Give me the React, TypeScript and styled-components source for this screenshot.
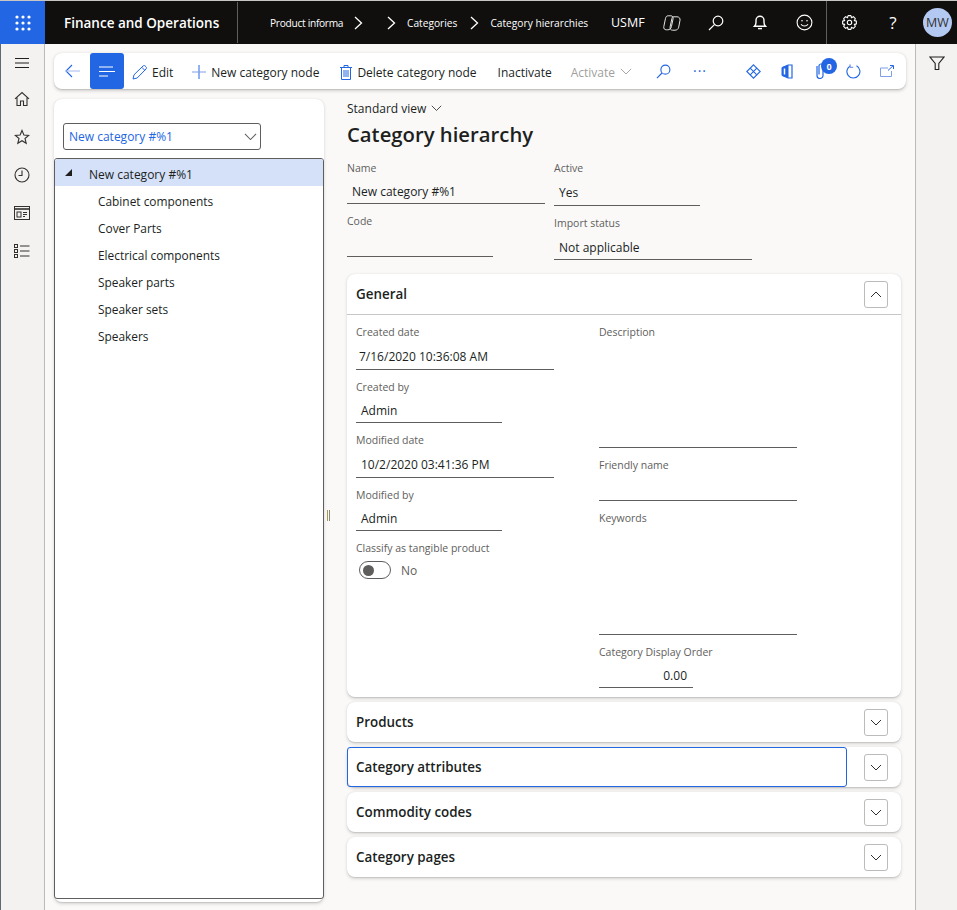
import styled, { createGlobalStyle } from "styled-components";

const BLUE = "#2266e3";
const FONT = `"Open Sans", "Noto Sans", "Liberation Sans", sans-serif`;

const GlobalStyle = createGlobalStyle`
  html, body {
    margin: 0;
    padding: 0;
    background: #faf9f8;
  }
  body {
    font-family: ${FONT};
    color: #201f1e;
  }
  * {
    box-sizing: border-box;
  }
`;

/* icons */

function Waffle() {
  const dots = [4, 10, 16];
  return (
    <svg width="20" height="20" viewBox="0 0 20 20" fill="#fff">
      {dots.map((y) =>
        dots.map((x) => <circle key={`${x}-${y}`} cx={x} cy={y} r="1.6" />)
      )}
    </svg>
  );
}

function Chevron({ size = 14, color = "#fff" }: { size?: number; color?: string }) {
  return (
    <svg width={size} height={size} viewBox="0 0 14 14" fill="none" stroke={color} strokeWidth="1.3">
      <path d="M4 1l6.5 6L4 13" />
    </svg>
  );
}

function ChevronDown({ width = 14, color = "#605e5c" }: { width?: number; color?: string }) {
  return (
    <svg width={width} height={width * 0.6} viewBox="0 0 14 8.4" fill="none" stroke={color} strokeWidth="1.1">
      <path d="M1 1l6 6 6-6" />
    </svg>
  );
}

function Search({ color = "#fff", size = 16 }: { color?: string; size?: number }) {
  return (
    <svg width={size} height={size} viewBox="0 0 16 16" fill="none" stroke={color} strokeWidth="1.2">
      <circle cx="10" cy="6" r="4.8" />
      <path d="M6.4 9.6L1 15" />
    </svg>
  );
}

function Copilot() {
  return (
    <svg width="18" height="16" viewBox="0 0 18 16" fill="none" stroke="#e6e6e6" strokeWidth="1">
      <path d="M5.200.8h2.600c1.700 0 2.700 1.300 2.300 3l-1.700 7.900c-.5 2.100-1.800 3.100-3.500 3.100H3.300C1.500 14.800.400 13.400.800 11.600L2.500 3.400C2.900 1.700 3.700.8 5.200.8z" />
      <path d="M10.300 1.800h3.700c2.100 0 3.400 1.500 3 3.500l-1.300 6.900c-.5 2-1.900 3-3.600 3H9.600c-1.900 0-2.900-1.400-2.500-3.200L8.600 5c.4-2.100.6-3.200 1.700-3.200z" />
    </svg>
  );
}

function Bell() {
  return (
    <svg width="14" height="15" viewBox="0 0 14 15" fill="none" stroke="#fff" strokeWidth="1.4">
      <path d="M1.500 11.200c.9-1 1.500-2 1.500-3.700V5.300a4 4 0 018 0v2.200c0 1.700.6 2.700 1.500 3.700z" />
      <path d="M5 13.600h4" />
    </svg>
  );
}

function Smiley() {
  return (
    <svg width="17" height="17" viewBox="0 0 17 17" fill="none" stroke="#fff" strokeWidth="1.1">
      <circle cx="8.500" cy="8.500" r="7.400" />
      <circle cx="6" cy="6.800" r=".8" fill="#fff" stroke="none" />
      <circle cx="11" cy="6.800" r=".8" fill="#fff" stroke="none" />
      <path d="M5 10.200c1.600 2.400 5.400 2.400 7 0" />
    </svg>
  );
}

function Gear() {
  // eight teeth round a ring, worked out rather than typed in
  const points: string[] = [];
  for (let i = 0; i < 8; i++) {
    const mid = (i * Math.PI) / 4;
    [
      [-0.42, 5.2],
      [-0.2, 7],
      [0.2, 7],
      [0.42, 5.2],
    ].forEach(([offset, radius]) => {
      const x = 7.5 + radius * Math.cos(mid + offset);
      const y = 7.5 + radius * Math.sin(mid + offset);
      points.push(`${x.toFixed(2)},${y.toFixed(2)}`);
    });
  }
  return (
    <svg width="15" height="15" viewBox="0 0 15 15" fill="none" stroke="#fff" strokeWidth="1.1">
      <polygon points={points.join(" ")} strokeLinejoin="round" />
      <circle cx="7.500" cy="7.500" r="2.200" />
    </svg>
  );
}

function Hamburger() {
  return (
    <svg width="16" height="12" viewBox="0 0 16 12" stroke="#201f1e" strokeWidth="1">
      <path d="M1 1.500h14M1 6h14M1 10.500h14" />
    </svg>
  );
}

function Home() {
  return (
    <svg width="16" height="16" viewBox="0 0 16 16" fill="none" stroke="#323130" strokeWidth="1.1">
      <path d="M1 7.800L8 1.600l7 6.200M3 6.400V14.500h3.500V10h3v4.500H13V6.400" />
    </svg>
  );
}

function Star() {
  return (
    <svg width="16" height="16" viewBox="0 0 16 16" fill="none" stroke="#323130" strokeWidth="1.1">
      <path d="M8 1.500l1.900 4.500 4.800.4-3.700 3.100 1.200 4.800L8 11.700l-4.200 2.600L5 9.500 1.300 6.400 6.100 6z" />
    </svg>
  );
}

function Clock() {
  return (
    <svg width="16" height="16" viewBox="0 0 16 16" fill="none" stroke="#323130" strokeWidth="1.1">
      <circle cx="8" cy="8" r="7" />
      <path d="M8 3.500V8.500H4.500" />
    </svg>
  );
}

function Workspace() {
  return (
    <svg width="16" height="14" viewBox="0 0 16 14" fill="none" stroke="#323130" strokeWidth="1">
      <rect x=".5" y=".5" width="15" height="13" />
      <path d="M.5 3h15" strokeWidth="1.600" />
      <rect x="3" y="6" width="4" height="5" />
      <path d="M9 6.500h4M9 8.500h4M9 10.500h2" />
    </svg>
  );
}

function ModuleList() {
  return (
    <svg width="16" height="14" viewBox="0 0 16 14" fill="none" stroke="#323130" strokeWidth="1">
      <rect x=".5" y=".5" width="3" height="3" />
      <rect x=".5" y="5.500" width="3" height="3" />
      <rect x=".5" y="10.500" width="3" height="3" />
      <path d="M6 2h9.500M6 7h9.500M6 12h9.500" />
    </svg>
  );
}

function Funnel() {
  return (
    <svg width="16" height="16" viewBox="0 0 16 16" fill="none" stroke="#201f1e" strokeWidth="1.1">
      <path d="M1 2h14L9.800 8.500V14.500H6.200V8.500z" />
    </svg>
  );
}

function BackArrow() {
  return (
    <svg width="15" height="14" viewBox="0 0 15 14" fill="none" stroke={BLUE} strokeWidth="1.1">
      <path d="M7 1L1 7l6 6" />
      <path d="M1 7h14" stroke="#a9bff0" />
    </svg>
  );
}

function Lines() {
  return (
    <svg width="16" height="11" viewBox="0 0 16 11" stroke="#fff" strokeWidth="1.200">
      <path d="M0 1h14M0 5.500h16M0 10h9" />
    </svg>
  );
}

function Pencil() {
  return (
    <svg width="15" height="15" viewBox="0 0 15 15" fill="none" stroke={BLUE} strokeWidth="1">
      <path d="M1 14l1-4.200L11 1c.7-.6 1.600-.6 2.200 0l.8.8c.6.6.6 1.500 0 2.200L5.200 13z" />
      <path d="M9.800 2.300l2.900 2.900" />
    </svg>
  );
}

function Plus() {
  return (
    <svg width="14" height="14" viewBox="0 0 14 14" stroke={BLUE} strokeWidth="1">
      <path d="M7 0v14" />
      <path d="M0 7h14" stroke="#7f9fe8" />
    </svg>
  );
}

function Trash() {
  return (
    <svg width="12" height="15" viewBox="0 0 12 15" fill="none" stroke={BLUE} strokeWidth="1">
      <path d="M0 2.500h12M4 2.500V.500h4v2M1.500 2.500v12h9v-12M4 5v7M6 5v7M8 5v7" />
    </svg>
  );
}

function Diamond() {
  return (
    <svg width="15" height="15" viewBox="0 0 15 15" fill="none" stroke={BLUE} strokeWidth="1.100">
      <path d="M7.500.800L14.200 7.500 7.500 14.200.800 7.500z" />
      <path d="M4.200 4.200l6.600 6.600M10.800 4.200l-6.600 6.600" />
    </svg>
  );
}

function OfficeMark() {
  return (
    <svg width="12" height="15" viewBox="0 0 12 15" fill="none" stroke={BLUE}>
      <path d="M1 3.500L7 1v13l-6-2.500z" fill={BLUE} strokeWidth="1" />
      <path d="M7 1h4v13H7" strokeWidth="1.200" />
      <path d="M3.500 4.500v6" stroke="#fff" strokeWidth="1.500" />
    </svg>
  );
}

function Clip() {
  return (
    <svg width="8" height="16" viewBox="0 0 8 16" fill="none" stroke={BLUE} strokeWidth="1.200">
      <path d="M1 3v9.500a3 3 0 006 0V3a2 2 0 00-4 0v8.500" />
    </svg>
  );
}

function Refresh() {
  return (
    <svg width="15" height="15" viewBox="0 0 15 15" fill="none" stroke={BLUE} strokeWidth="1.100">
      <path d="M4.500 1.700a6.500 6.500 0 106 .1" />
      <path d="M4 .2v3.200h3.200" stroke="#7f9fe8" />
    </svg>
  );
}

function OpenOut() {
  return (
    <svg width="14" height="12" viewBox="0 0 14 12" fill="none" stroke={BLUE} strokeWidth="1">
      <path d="M8 3H.500v8.500h11V6" stroke="#7f9fe8" />
      <path d="M8 5.500L13 .800M10 .500h3.500V4" />
    </svg>
  );
}

/* top bar */

const TopBar = styled.header`
  display: flex;
  align-items: center;
  height: 44px;
  border-top: 1px solid #c8c6c4;
  background: #100f0e;
  color: #fff;
`;

const WaffleButton = styled.div`
  display: flex;
  align-items: center;
  justify-content: center;
  width: 45px;
  height: 43px;
  background: ${BLUE};
`;

const Brand = styled.div`
  display: flex;
  align-items: center;
  width: 193px;
  height: 41px;
  padding-left: 19px;
  border-right: 1px solid #605e5c;
  font-size: 13.500px;
  font-weight: 600;
  white-space: nowrap;
`;

const Crumbs = styled.nav`
  display: flex;
  align-items: center;
  flex: 1;
  padding-left: 32px;
  font-size: 10.200px;
`;

const Crumb = styled.span<{ $width?: number; $left?: number; $squeeze?: boolean }>`
  display: block;
  width: ${(p) => (p.$width ? `${p.$width}px` : "auto")};
  margin-left: ${(p) => p.$left ?? 0}px;
  letter-spacing: ${(p) => (p.$squeeze ? "-0.3px" : "0")};
  white-space: nowrap;
`;

const CrumbArrow = styled.span<{ $left: number; $right: number }>`
  display: flex;
  margin: 0 ${(p) => p.$right}px 0 ${(p) => p.$left}px;
`;

const Company = styled.span`
  width: 39px;
  font-size: 12.500px;
`;

const TopIcon = styled.span<{ $width: number }>`
  display: flex;
  align-items: center;
  justify-content: center;
  width: ${(p) => p.$width}px;
  height: 43px;
`;

const TopDivider = styled.span`
  width: 1px;
  height: 44px;
  background: #605e5c;
`;

const HelpMark = styled.span`
  font-size: 17px;
`;

const Avatar = styled.span`
  display: flex;
  align-items: center;
  justify-content: center;
  width: 29px;
  height: 29px;
  margin: 0 5px 0 8px;
  border-radius: 50%;
  background: #b4c9f2;
  color: #323130;
  font-size: 12.500px;
`;

/* page */

const Body = styled.div`
  display: flex;
  height: 866px;
`;

const Rail = styled.aside`
  display: flex;
  flex-direction: column;
  align-items: center;
  width: 45px;
  padding-top: 13px;
  border-left: 1px solid #5d6a73;
  border-right: 1px solid #bdbbb9;
  background: #f3f2f1;
`;

const RailMenu = styled.span`
  display: flex;
  align-items: center;
  justify-content: center;
  height: 12px;
  margin: 0 0 11px -1px;
`;

const RailItem = styled.span`
  display: flex;
  align-items: center;
  justify-content: center;
  height: 38px;
  margin-left: -1px;
`;

const Main = styled.main`
  flex: 1;
  min-width: 0;
  padding: 9px 9px 0 9px;
  background: #faf9f8;
`;

const FilterPane = styled.aside`
  display: flex;
  justify-content: center;
  width: 42px;
  padding-top: 11px;
  border-left: 1px solid #bdbbb9;
  background: #f3f2f1;
`;

const Toolbar = styled.div`
  display: flex;
  align-items: center;
  height: 36px;
  border-radius: 8px;
  background: #fff;
  box-shadow: 0 1.6px 3.6px rgba(0, 0, 0, 0.16), 0 0.3px 0.9px rgba(0, 0, 0, 0.1);
  font-size: 12px;
`;

const ToolIcon = styled.span<{ $width: number; $left?: number }>`
  display: flex;
  align-items: center;
  justify-content: center;
  width: ${(p) => p.$width}px;
  height: 36px;
  margin-left: ${(p) => p.$left ?? 0}px;
`;

const ActiveTool = styled(ToolIcon)`
  border-radius: 3px;
  background: ${BLUE};
`;

const ToolButton = styled.span<{ $left: number; $disabled?: boolean }>`
  display: flex;
  align-items: center;
  gap: 5px;
  margin-left: ${(p) => p.$left}px;
  padding-top: 2px;
  color: ${(p) => (p.$disabled ? "#a19f9d" : "#201f1e")};
  white-space: nowrap;
`;

const Dots = styled.span`
  color: ${BLUE};
  font-size: 14px;
  letter-spacing: 1px;
  line-height: 1;
`;

const ClipHolder = styled(ToolIcon)`
  position: relative;
`;

const Badge = styled.span`
  position: absolute;
  top: 5px;
  left: 9px;
  display: flex;
  align-items: center;
  justify-content: center;
  width: 16px;
  height: 16px;
  border-radius: 50%;
  background: ${BLUE};
  color: #fff;
  font-size: 9px;
  font-weight: 700;
`;

const Content = styled.div`
  display: flex;
  margin-top: 10px;
`;

const TreePanel = styled.section`
  display: flex;
  flex-direction: column;
  width: 270px;
  height: 803px;
  padding-bottom: 3px;
  border-radius: 8px;
  background: #fff;
  box-shadow: 0 1.6px 3.6px rgba(0, 0, 0, 0.14), 0 0.3px 0.9px rgba(0, 0, 0, 0.1);
`;

const SelectBox = styled.div`
  display: flex;
  align-items: center;
  justify-content: space-between;
  width: 198px;
  height: 27px;
  margin: 24px 0 8px 9px;
  padding: 0 3px 0 5px;
  border: 1px solid #605e5c;
  border-radius: 3px;
  color: ${BLUE};
  font-size: 12px;
`;

const Tree = styled.div`
  flex: 1;
  border: 1px solid #605e5c;
  border-radius: 3px;
  overflow: hidden;
`;

const TreeRoot = styled.div`
  display: flex;
  align-items: center;
  height: 27px;
  padding: 3px 0 0 10px;
  background: #d5e1f8;
  font-size: 12px;
`;

const TreeCaret = styled.span`
  width: 0;
  height: 0;
  margin: -3px 17px 0 0;
  border-style: solid;
  border-width: 0 0 7px 7px;
  border-color: transparent transparent #201f1e transparent;
`;

const TreeRow = styled.div`
  display: flex;
  align-items: center;
  height: 27px;
  padding: 3px 0 0 43px;
  font-size: 11.900px;
`;

const Splitter = styled.div`
  display: flex;
  flex: none;
  align-items: center;
  width: 23px;
  height: 803px;
  padding: 30px 0 0 3px;
`;

const SplitterGrip = styled.span`
  width: 3px;
  height: 11px;
  border-left: 1px solid #a39a58;
  border-right: 1px solid #8d8a70;
`;

const Form = styled.section`
  flex: 1;
  min-width: 0;
  padding-right: 5px;
`;

const ViewPicker = styled.div`
  display: flex;
  align-items: center;
  gap: 5px;
  height: 19px;
  font-size: 12px;
`;

const Title = styled.h1`
  margin: 1px 0 11px;
  font-size: 20.300px;
  font-weight: 600;
  line-height: 30px;
`;

const HeaderGrid = styled.div`
  display: grid;
  grid-template-columns: 207px 1fr;
`;

const FieldColumn = styled.div`
  display: flex;
  flex-direction: column;
  align-items: flex-start;
`;

const Label = styled.div`
  height: 16px;
  color: #605e5c;
  font-size: 10.500px;
  line-height: 16px;
  white-space: nowrap;
`;

const Value = styled.div<{
  $width: number;
  $height: number;
  $gapBelow?: number;
  $right?: boolean;
  $inset?: number;
}>`
  display: flex;
  align-items: center;
  justify-content: ${(p) => (p.$right ? "flex-end" : "flex-start")};
  width: ${(p) => p.$width}px;
  height: ${(p) => p.$height}px;
  margin-bottom: ${(p) => p.$gapBelow ?? 0}px;
  padding: ${(p) => (p.$right ? "4px 6px 0 0" : `4px 0 0 ${p.$inset ?? 5}px`)};
  border-bottom: 1px solid #605e5c;
  font-size: 12px;
  white-space: nowrap;
`;

const Card = styled.section<{ $height: number }>`
  height: ${(p) => p.$height}px;
  margin-bottom: 5px;
  border-radius: 8px;
  background: #fff;
  box-shadow: 0 1.6px 3.6px rgba(0, 0, 0, 0.14), 0 0.3px 0.9px rgba(0, 0, 0, 0.1);
`;

const CardHeader = styled.div<{ $ruled?: boolean }>`
  display: flex;
  align-items: center;
  justify-content: space-between;
  height: ${(p) => (p.$ruled ? 41 : 40)}px;
  padding: 0 13px 0 9px;
  border-bottom: ${(p) => (p.$ruled ? "1px solid #c8c6c4" : "none")};
`;

const CardTitle = styled.h2`
  margin: 0;
  font-size: 13.400px;
  font-weight: 600;
`;

const FocusedHeader = styled.div`
  display: flex;
  align-items: center;
  justify-content: space-between;
  height: 40px;
  padding-right: 13px;
`;

const FocusedTitle = styled.div`
  display: flex;
  align-items: center;
  width: 500px;
  height: 40px;
  padding-left: 8px;
  border: 1px solid ${BLUE};
  border-radius: 3px;
`;

const ExpandButton = styled.button`
  display: flex;
  align-items: center;
  justify-content: center;
  width: 24px;
  height: 27px;
  padding: 0;
  border: 1px solid #bdbbb9;
  border-radius: 3px;
  background: #fff;
`;

const GeneralBody = styled.div`
  display: grid;
  grid-template-columns: 243px 1fr;
  padding: 9px 0 0 9px;
`;

const Toggle = styled.div`
  display: flex;
  align-items: center;
  gap: 10px;
  margin: 5px 0 0 3px;
  color: #605e5c;
  font-size: 12px;
`;

const ToggleTrack = styled.span`
  display: flex;
  align-items: center;
  width: 32px;
  height: 18px;
  padding-left: 3px;
  border: 1px solid #605e5c;
  border-radius: 9px;
`;

const ToggleKnob = styled.span`
  width: 11px;
  height: 11px;
  border-radius: 50%;
  background: #605e5c;
`;

const treeItems = [
  "Cabinet components",
  "Cover Parts",
  "Electrical components",
  "Speaker parts",
  "Speaker sets",
  "Speakers",
];

function Expander({ open }: { open?: boolean }) {
  return (
    <ExpandButton>
      <svg width="12" height="7" viewBox="0 0 12 7" fill="none" stroke="#323130" strokeWidth="1">
        <path d={open ? "M1 6l5-5 5 5" : "M1 1l5 5 5-5"} />
      </svg>
    </ExpandButton>
  );
}

export default function App() {
  return (
    <>
      <GlobalStyle />
      <TopBar>
        <WaffleButton>
          <Waffle />
        </WaffleButton>
        <Brand>Finance and Operations</Brand>
        <Crumbs>
          <Crumb $width={73} $squeeze>
            Product informa
          </Crumb>
          <CrumbArrow $left={8} $right={19}>
            <Chevron />
          </CrumbArrow>
          <Chevron />
          <Crumb $left={9}>Categories</Crumb>
          <CrumbArrow $left={10} $right={9}>
            <Chevron />
          </CrumbArrow>
          <Crumb>Category hierarchies</Crumb>
        </Crumbs>
        <Company>USMF</Company>
        <TopIcon $width={43}>
          <Copilot />
        </TopIcon>
        <TopIcon $width={45}>
          <Search />
        </TopIcon>
        <TopIcon $width={44}>
          <Bell />
        </TopIcon>
        <TopIcon $width={44}>
          <Smiley />
        </TopIcon>
        <TopDivider />
        <TopIcon $width={44}>
          <Gear />
        </TopIcon>
        <TopIcon $width={44}>
          <HelpMark>?</HelpMark>
        </TopIcon>
        <Avatar>MW</Avatar>
      </TopBar>
      <Body>
        <Rail>
          <RailMenu>
            <Hamburger />
          </RailMenu>
          <RailItem>
            <Home />
          </RailItem>
          <RailItem>
            <Star />
          </RailItem>
          <RailItem>
            <Clock />
          </RailItem>
          <RailItem>
            <Workspace />
          </RailItem>
          <RailItem>
            <ModuleList />
          </RailItem>
        </Rail>
        <Main>
          <Toolbar>
            <ToolIcon $width={36}>
              <BackArrow />
            </ToolIcon>
            <ActiveTool $width={34}>
              <Lines />
            </ActiveTool>
            <ToolButton $left={8}>
              <Pencil />
              Edit
            </ToolButton>
            <ToolButton $left={19}>
              <Plus />
              New category node
            </ToolButton>
            <ToolButton $left={21}>
              <Trash />
              Delete category node
            </ToolButton>
            <ToolButton $left={21}>Inactivate</ToolButton>
            <ToolButton $left={19} $disabled>
              Activate
              <ChevronDown width={12} color="#a19f9d" />
            </ToolButton>
            <ToolIcon $width={16} $left={23}>
              <Search color={BLUE} size={15} />
            </ToolIcon>
            <ToolIcon $width={16} $left={21}>
              <Dots>···</Dots>
            </ToolIcon>
            <ToolIcon $width={16} $left={37}>
              <Diamond />
            </ToolIcon>
            <ToolIcon $width={16} $left={18}>
              <OfficeMark />
            </ToolIcon>
            <ClipHolder $width={16} $left={17}>
              <Clip />
              <Badge>0</Badge>
            </ClipHolder>
            <ToolIcon $width={16} $left={17}>
              <Refresh />
            </ToolIcon>
            <ToolIcon $width={16} $left={18}>
              <OpenOut />
            </ToolIcon>
          </Toolbar>
          <Content>
            <TreePanel>
              <SelectBox>
                New category #%1
                <ChevronDown width={13} />
              </SelectBox>
              <Tree>
                <TreeRoot>
                  <TreeCaret />
                  New category #%1
                </TreeRoot>
                {treeItems.map((item) => (
                  <TreeRow key={item}>{item}</TreeRow>
                ))}
              </Tree>
            </TreePanel>
            <Splitter>
              <SplitterGrip />
            </Splitter>
            <Form>
              <ViewPicker>
                Standard view
                <ChevronDown width={11} color="#323130" />
              </ViewPicker>
              <Title>Category hierarchy</Title>
              <HeaderGrid>
                <FieldColumn>
                  <Label>Name</Label>
                  <Value $width={198} $height={28} $gapBelow={9}>
                    New category #%1
                  </Value>
                  <Label>Code</Label>
                  <Value $width={146} $height={28} />
                </FieldColumn>
                <FieldColumn>
                  <Label>Active</Label>
                  <Value $width={146} $height={30} $gapBelow={9}>
                    Yes
                  </Value>
                  <Label>Import status</Label>
                  <Value $width={198} $height={29} $gapBelow={14}>
                    Not applicable
                  </Value>
                </FieldColumn>
              </HeaderGrid>
              <Card $height={423}>
                <CardHeader $ruled>
                  <CardTitle>General</CardTitle>
                  <Expander open />
                </CardHeader>
                <GeneralBody>
                  <FieldColumn>
                    <Label>Created date</Label>
                    <Value $width={198} $height={30} $gapBelow={9} $inset={3}>
                      7/16/2020 10:36:08 AM
                    </Value>
                    <Label>Created by</Label>
                    <Value $width={146} $height={28} $gapBelow={9}>
                      Admin
                    </Value>
                    <Label>Modified date</Label>
                    <Value $width={198} $height={30} $gapBelow={9}>
                      10/2/2020 03:41:36 PM
                    </Value>
                    <Label>Modified by</Label>
                    <Value $width={146} $height={28} $gapBelow={9}>
                      Admin
                    </Value>
                    <Label>Classify as tangible product</Label>
                    <Toggle>
                      <ToggleTrack>
                        <ToggleKnob />
                      </ToggleTrack>
                      No
                    </Toggle>
                  </FieldColumn>
                  <FieldColumn>
                    <Label>Description</Label>
                    <Value $width={198} $height={108} $gapBelow={9} />
                    <Label>Friendly name</Label>
                    <Value $width={198} $height={28} $gapBelow={9} />
                    <Label>Keywords</Label>
                    <Value $width={198} $height={109} $gapBelow={9} />
                    <Label>Category Display Order</Label>
                    <Value $width={94} $height={28} $right>
                      0.00
                    </Value>
                  </FieldColumn>
                </GeneralBody>
              </Card>
              <Card $height={40}>
                <CardHeader>
                  <CardTitle>Products</CardTitle>
                  <Expander />
                </CardHeader>
              </Card>
              <Card $height={40}>
                <FocusedHeader>
                  <FocusedTitle>
                    <CardTitle>Category attributes</CardTitle>
                  </FocusedTitle>
                  <Expander />
                </FocusedHeader>
              </Card>
              <Card $height={40}>
                <CardHeader>
                  <CardTitle>Commodity codes</CardTitle>
                  <Expander />
                </CardHeader>
              </Card>
              <Card $height={40}>
                <CardHeader>
                  <CardTitle>Category pages</CardTitle>
                  <Expander />
                </CardHeader>
              </Card>
            </Form>
          </Content>
        </Main>
        <FilterPane>
          <Funnel />
        </FilterPane>
      </Body>
    </>
  );
}
